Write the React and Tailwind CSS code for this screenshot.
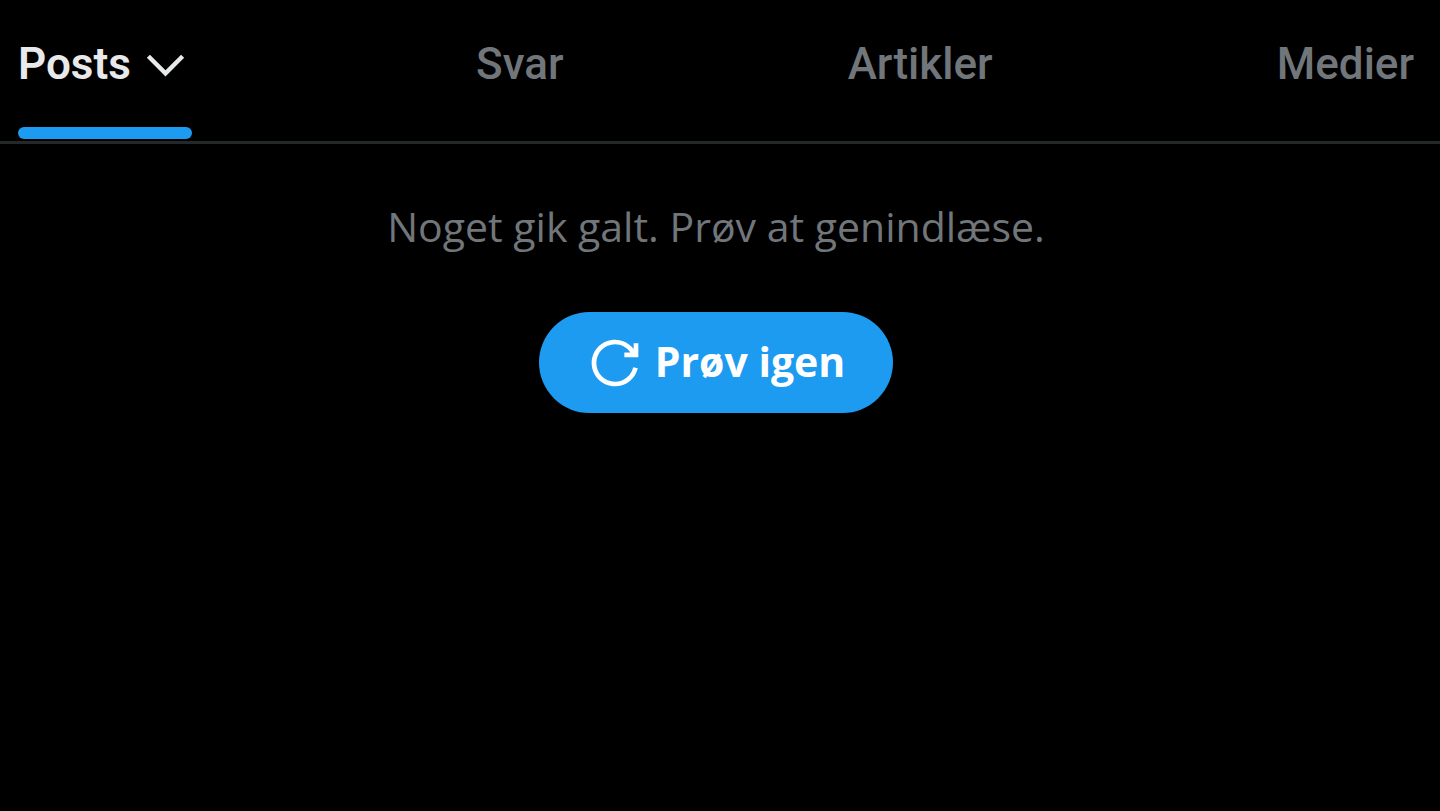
import { useState } from "react";
import clsx from "clsx";

const tabs = [
  { id: "posts", label: "Posts", hasMenu: true },
  { id: "replies", label: "Svar" },
  { id: "articles", label: "Artikler" },
  { id: "media", label: "Medier" },
];

function ChevronIcon() {
  return (
    <svg viewBox="0 0 24 24" className="size-[53px]" fill="currentColor" aria-hidden="true">
      <path d="M3.543 8.96l1.414-1.42L12 14.59l7.043-7.05 1.414 1.42L12 17.41 3.543 8.96z" />
    </svg>
  );
}

function RetryIcon() {
  return (
    <svg viewBox="0 0 24 24" className="size-14" fill="currentColor" aria-hidden="true">
      <path d="M12 4c-4.418 0-8 3.58-8 8s3.582 8 8 8c3.806 0 6.993-2.66 7.802-6.22l1.95.44C20.742 18.67 16.76 22 12 22 6.477 22 2 17.52 2 12S6.477 2 12 2c3.272 0 6.176 1.57 8 4V3.5h2v6h-6v-2h2.616C17.175 5.39 14.749 4 12 4z" />
    </svg>
  );
}

function App() {
  const [activeTab, setActiveTab] = useState("posts");

  return (
    <div className="min-h-screen bg-black font-['Roboto',sans-serif] text-[#71767b]">
      {/* TABS */}
      <nav className="flex justify-between border-b-3 border-[#252829] pl-[18px] pr-[26px]">
        {tabs.map((tab) => {
          const isActive = tab.id === activeTab;
          return (
            <button
              key={tab.id}
              onClick={() => setActiveTab(tab.id)}
              className={clsx(
                "flex flex-col text-[44px] leading-[53px]",
                isActive ? "font-semibold text-[#e7e9ea]" : "font-medium"
              )}
            >
              <span className="flex items-center gap-2 pt-[38px] pb-9">
                {tab.label}
                {tab.hasMenu && <ChevronIcon />}
              </span>
              <span
                className={clsx(
                  "mb-0.5 h-3 w-full rounded-full",
                  isActive && "bg-[#1d9bf0]"
                )}
              />
            </button>
          );
        })}
      </nav>

      {/* ERROR */}
      <main className="flex flex-col items-center gap-15 pt-14 pr-2 font-['Open_Sans',sans-serif] text-[41px] leading-[52px]">
        <p>Noget gik galt. Prøv at genindlæse.</p>
        <button className="flex h-[101px] items-center gap-3 rounded-full bg-[#1d9bf0] px-12 font-bold text-white">
          <RetryIcon />
          <span className="pb-1">Prøv igen</span>
        </button>
      </main>
    </div>
  );
}

export default App;
